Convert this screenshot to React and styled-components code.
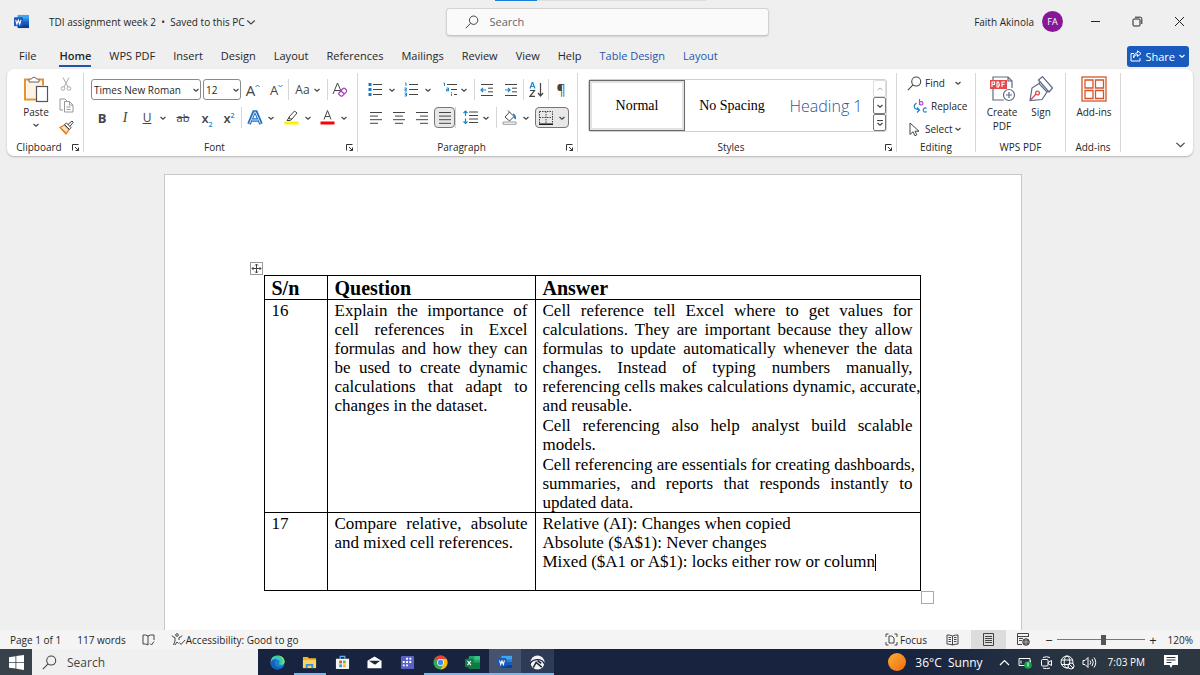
import React from 'react';
import styled, { createGlobalStyle } from 'styled-components';

const tabs = [
  { name: 'File', wide: true },
  { name: 'Home', active: true },
  { name: 'WPS PDF' },
  { name: 'Insert' },
  { name: 'Design' },
  { name: 'Layout' },
  { name: 'References' },
  { name: 'Mailings' },
  { name: 'Review' },
  { name: 'View' },
  { name: 'Help' },
  { name: 'Table Design', blue: true },
  { name: 'Layout', blue: true },
];

const Icon = ({ w = 16, h = w, box, children, ...rest }) => (
  <Svg width={w} height={h} viewBox={box || `0 0 ${w} ${h}`} aria-hidden='true' {...rest}>
    {children}
  </Svg>
);

const Chevron = ({ size = 8, ...rest }) => (
  <Icon w={size} box='0 0 8 8' {...rest}>
    <path d='M1.5 3 4 5.3 6.5 3' strokeWidth={size > 8 ? 0.8 : 1.2} />
  </Icon>
);

const Launcher = ({ label }) => (
  <LauncherButton type='button' aria-label={label}>
    <Icon w={9}>
      <path d='M1.5 7.5v-6h6M4 4l3.5 3.5M7.5 4.5v3h-3' stroke='#333' />
    </Icon>
  </LauncherButton>
);

const WordLogo = ({ size }) => (
  <Icon w={size} box='0 0 16 16' stroke='none'>
    <rect x='4' y='1' width='12' height='14' rx='1' fill='#2b7cd3' />
    <rect x='4' y='1' width='12' height='4' fill='#41a5ee' />
    <rect x='4' y='8' width='12' height='4' fill='#185abd' />
    <rect x='4' y='11.5' width='12' height='3.5' fill='#103f91' />
    <rect x='0' y='3.5' width='9.5' height='9.5' rx='1' fill='#185abd' />
    <path d='M1.8 6.2 3.1 10.8 4.6 6.6 6.1 10.8 7.4 6.2' stroke='#fff' strokeWidth='1.2' />
  </Icon>
);

const SearchGlyph = ({ size = 14 }) => (
  <Icon w={size} box='0 0 14 14'>
    <circle cx='8.6' cy='5.2' r='4.2' />
    <path d='M5.6 8.3.8 13.2' />
  </Icon>
);

const Lines = ({ rows }) => (
  <Icon w={14} h={14}>
    {rows.map(([from, to], i) => (
      <path key={i} d={`M${from} ${1.5 + i * 3.6}H${to}`} />
    ))}
  </Icon>
);

const TitleBar = () => (
  <Title>
    <TitleLeft>
      <WordLogo size={15} />
      <DocName type='button'>
        TDI assignment week 2 &nbsp;•&nbsp; Saved to this PC
        <Chevron size={12} />
      </DocName>
    </TitleLeft>
    <TitleSearch>
      <SearchGlyph />
      <input type='text' placeholder='Search' aria-label='Search' />
    </TitleSearch>
    <TitleRight>
      <span>Faith Akinola</span>
      <Avatar>FA</Avatar>
      <WindowButton type='button' aria-label='Minimize'>
        <Icon w={11}>
          <path d='M1 5.5h9' stroke='#222' />
        </Icon>
      </WindowButton>
      <WindowButton type='button' aria-label='Restore'>
        <Icon w={11}>
          <rect x='1' y='3' width='7' height='7' rx='1' stroke='#222' />
          <path d='M3 1.2h5.5a1.3 1.3 0 0 1 1.3 1.3V8' stroke='#222' />
        </Icon>
      </WindowButton>
      <WindowButton type='button' aria-label='Close'>
        <Icon w={11}>
          <path d='m1 1 9 9M10 1l-9 9' stroke='#222' />
        </Icon>
      </WindowButton>
    </TitleRight>
  </Title>
);

const ClipboardGroup = () => (
  <Group $w={77}>
    <Body $inset={9}>
      <BigButton type='button' $w={40}>
        <Icon w={26} h={28}>
          <path d='M6 4.5H2v20h12M16 4.5h4v6' stroke='#e8912d' strokeWidth='2' />
          <path d='M3.5 6h15v5h-5v12h-10z' fill='#fdf3e4' stroke='none' />
          <path d='M6 7V4h2.6a2.5 2.5 0 0 1 4.8 0H16v3z' fill='#fff' stroke='#666' />
          <rect x='13.5' y='11.5' width='11' height='15' fill='#fff' stroke='#555' strokeWidth='1.2' />
        </Icon>
        Paste
        <Chevron />
      </BigButton>
      <Stack $gap={1}>
        <Tool type='button' aria-label='Cut' $w={20}>
          <Icon w={14}>
            <g stroke='#aaa'>
              <path d='M4 .5 9 10M10 .5 5 10' />
              <circle cx='4' cy='11.5' r='1.8' />
              <circle cx='10' cy='11.5' r='1.8' />
            </g>
          </Icon>
        </Tool>
        <Tool type='button' aria-label='Copy' $w={20}>
          <Icon w={15}>
            <g stroke='#999'>
              <path d='M4 12H1V1h5l2 2' />
              <path d='M5.5 3.5h5L14 7v7H5.5zM10.5 3.5V7H14M7.5 9h4M7.5 11.5h4' />
            </g>
          </Icon>
        </Tool>
        <Tool type='button' aria-label='Format Painter' $w={20}>
          <Icon w={15}>
            <path d='M1 7.5 5.5 5 10 9.5 7 14z' fill='#fbe3c6' stroke='#e07b1a' strokeWidth='1.3' />
            <path d='m3 9 4 3.5' stroke='#e07b1a' />
            <path d='m5.5 4.5 2-1.500L12 7.500 10.500 9.500zM9 4.500 13 1l1.200 1.200L11 6.300' stroke='#444' fill='#fff' />
          </Icon>
        </Tool>
      </Stack>
    </Body>
    <Label>
      <span>Clipboard</span>
      <Launcher label='Clipboard settings' />
    </Label>
  </Group>
);

const FontGroup = () => (
  <Group $w={274}>
    <Body $column $inset={7}>
      <Row>
        <SelectBox $w={110}>
          <select aria-label='Font' defaultValue='Times New Roman'>
            <option>Times New Roman</option>
          </select>
          <Chevron />
        </SelectBox>
        <SelectBox $w={38} $gap={2}>
          <select aria-label='Font size' defaultValue='12'>
            <option>12</option>
          </select>
          <Chevron />
        </SelectBox>
        <Tool type='button' aria-label='Increase font size' $w={24} $size={15}>
          A
          <Icon w={5} h={12}>
            <path d='m.5 3 2-2 2 2' stroke='#1a86d0' />
          </Icon>
        </Tool>
        <Tool type='button' aria-label='Decrease font size' $w={23} $size={13}>
          A
          <Icon w={5} h={12}>
            <path d='m.5 1 2 2 2-2' stroke='#1a86d0' />
          </Icon>
        </Tool>
        <Rule />
        <Tool type='button' aria-label='Change case' $w={38} $size={12} $gap={3}>
          Aa
          <Chevron />
        </Tool>
        <Rule />
        <Tool type='button' aria-label='Clear formatting' $w={24}>
          <Icon w={16}>
            <path d='M1 12 5.5 1 9 9M2.700 8.500H8' />
            <path d='m7 11 4-4.500q1-.8 2 0l1.300 1.300q.8 1 0 2l-3.800 4q-1 .8-2 0L7 12.500q-.7-.7 0-1.500zM9 9l3.300 3' stroke='#a63db8' strokeWidth='1.2' />
          </Icon>
        </Tool>
      </Row>
      <Row>
        <Tool type='button' aria-label='Bold' $w={22} $size={13}>
          <b>B</b>
        </Tool>
        <Tool type='button' aria-label='Italic' $w={24} $size={14}>
          <SerifItalic>I</SerifItalic>
        </Tool>
        <Tool type='button' aria-label='Underline' $w={20} $size={12}>
          <u>U</u>
        </Tool>
        <Tool type='button' aria-label='Underline style' $w={12}>
          <Chevron />
        </Tool>
        <Tool type='button' aria-label='Strikethrough' $w={28} $size={11}>
          <s>ab</s>
        </Tool>
        <Tool type='button' aria-label='Subscript' $w={20} $size={13}>
          <Script>
            x<sub>2</sub>
          </Script>
        </Tool>
        <Tool type='button' aria-label='Superscript' $w={24} $size={13}>
          <Script>
            x<sup>2</sup>
          </Script>
        </Tool>
        <Rule />
        <Tool type='button' aria-label='Text effects' $w={38} $gap={4}>
          <Icon w={16}>
            <path d='M2 14 7 2h2l5 12M4.7 10h6.600' stroke='#1e6fc0' strokeWidth='3.6' />
            <path d='M2.5 13.5 7.500 2h1l5 11.500M5 10h6' stroke='#d8ecfb' />
          </Icon>
          <Chevron />
        </Tool>
        <Tool type='button' aria-label='Highlight colour' $w={36} $gap={5}>
          <Icon w={15}>
            <path d='M.5 11.5h14v3H.5z' fill='#ffef00' stroke='none' />
            <path d='M5 7 10.500 1 13 3 8 9H5.500zM5.500 7 3 10.500h3.500L8 9' />
          </Icon>
          <Chevron />
        </Tool>
        <Tool type='button' aria-label='Font colour' $w={36} $gap={5}>
          <Icon w={15}>
            <path d='M.5 11.5h14v3H.5z' fill='#f00' stroke='none' />
            <path d='m4 9.5 3.500-9 3.500 9M5.200 6.500h4.600' />
          </Icon>
          <Chevron />
        </Tool>
      </Row>
    </Body>
    <Label>
      <span>Font</span>
      <Launcher label='Font settings' />
    </Label>
  </Group>
);

const ParagraphGroup = () => (
  <Group $w={220}>
    <Body $column $inset={6}>
      <Row>
        <Tool type='button' aria-label='Bullets' $w={36} $gap={5}>
          <Icon w={15}>
            <path d='M5 2.5h9M5 7.5h9M5 12.5h9' />
            <path d='M.5 1h3v3h-3zM.5 6h3v3h-3zM.5 11h3v3h-3z' fill='#1a78c8' stroke='none' />
          </Icon>
          <Chevron />
        </Tool>
        <Tool type='button' aria-label='Numbering' $w={36} $gap={5}>
          <Icon w={15}>
            <path d='M5 2.5h9M5 7.5h9M5 12.5h9' />
            <path d='M1 1h1v3M.5 6h2v1.5H1V9h2M.5 11h2v3h-2M1 12.5h1.5' stroke='#1a86d0' />
          </Icon>
          <Chevron />
        </Tool>
        <Tool type='button' aria-label='Multilevel list' $w={38} $gap={2}>
          <Icon w={15}>
            <path d='M4 2.5h10M8 7.5h6M11 12.5h3' />
            <path d='M.5 1h1v3M3.5 6h2v3h-2V7.500h2M8.500 11.500V14M8.500 10v.8' stroke='#1a86d0' />
          </Icon>
          <Chevron />
        </Tool>
        <Rule />
        <Tool type='button' aria-label='Decrease indent' $w={24}>
          <Icon w={14}>
            <path d='M1 1.5h12M8 5.2h5M8 8.8h5M1 12.5h12' />
            <path d='M6 7H1M3 5 1 7l2 2' stroke='#1a86d0' strokeWidth='1.2' />
          </Icon>
        </Tool>
        <Tool type='button' aria-label='Increase indent' $w={24}>
          <Icon w={14}>
            <path d='M1 1.5h12M8 5.2h5M8 8.8h5M1 12.5h12' />
            <path d='M1 7h5M4 5l2 2-2 2' stroke='#1a86d0' strokeWidth='1.2' />
          </Icon>
        </Tool>
        <Rule />
        <Tool type='button' aria-label='Sort' $w={24}>
          <Icon w={15}>
            <path d='M1 6.5 3.5 0 6 6.5M2 4.5h3' stroke='#1a86d0' strokeWidth='1.2' />
            <path d='M1 8.5h4.5L1 14.300h5M11.500 1v13M9 11l2.500 3L14 11' strokeWidth='1.2' />
          </Icon>
        </Tool>
        <Rule />
        <Tool type='button' aria-label='Show formatting marks' $w={24} $size={14}>
          ¶
        </Tool>
      </Row>
      <Row>
        <Tool type='button' aria-label='Align left' $w={24}>
          <Lines rows={[[1, 13], [1, 9], [1, 13], [1, 9]]} />
        </Tool>
        <Tool type='button' aria-label='Centre' $w={22}>
          <Lines rows={[[1, 13], [3, 11], [1, 13], [3, 11]]} />
        </Tool>
        <Tool type='button' aria-label='Align right' $w={24}>
          <Lines rows={[[1, 13], [5, 13], [1, 13], [5, 13]]} />
        </Tool>
        <Tool type='button' aria-label='Justify' aria-pressed='true' $w={21} $on>
          <Lines rows={[[1, 13], [1, 13], [1, 13], [1, 13]]} />
        </Tool>
        <Rule />
        <Tool type='button' aria-label='Line spacing' $w={40} $gap={4}>
          <Icon w={15}>
            <path d='M6 2h9M6 5.5h9M6 9h9M6 12.5h9' />
            <path d='M2.500 1v5M.5 3l2-2 2 2M2.500 8.500v5M.5 11.500l2 2 2-2' stroke='#1a86d0' strokeWidth='1.2' />
          </Icon>
          <Chevron />
        </Tool>
        <Rule />
        <Tool type='button' aria-label='Shading' $w={38} $gap={5}>
          <Icon w={15}>
            <path d='M3 7 7.5 2 12 6.5 7.500 11zM7.500 2 6 .5' />
            <path d='M11 4q2.500 0 2.500 5-1.500-.5-1.500-3' fill='#1a78c8' stroke='#1a78c8' />
            <path d='M1 12h13v2.300H1z' stroke='#999' />
          </Icon>
          <Chevron />
        </Tool>
        <Tool type='button' aria-label='Borders' $w={34} $gap={5} $on>
          <Icon w={14}>
            <path d='M.5.5h13v12M.5.5v12M7 .5v12M.5 6.5h13' strokeDasharray='1.5 1' />
            <path d='M0 13.200h14' stroke='#111' strokeWidth='1.5' />
          </Icon>
          <Chevron />
        </Tool>
      </Row>
    </Body>
    <Label>
      <span>Paragraph</span>
      <Launcher label='Paragraph settings' />
    </Label>
  </Group>
);

const StylesGroup = () => (
  <Group $w={319}>
    <Body $inset={5}>
      <Gallery>
        <StyleItem type='button' $picked>
          Normal
        </StyleItem>
        <StyleItem type='button'>No Spacing</StyleItem>
        <StyleItem type='button' $heading>
          Heading 1
        </StyleItem>
        <GalleryScroll>
          <button type='button' aria-label='Previous styles' disabled>
            <Icon w={8}>
              <path d='M1.500 5 4 3l2.500 2' stroke='#aaa' />
            </Icon>
          </button>
          <button type='button' aria-label='Next styles'>
            <Chevron />
          </button>
          <button type='button' aria-label='More styles'>
            <Icon w={8}>
              <path d='M1 1.5h6M1.500 4 4 6.300 6.500 4' strokeWidth='1.2' />
            </Icon>
          </button>
        </GalleryScroll>
      </Gallery>
    </Body>
    <Label>
      <span>Styles</span>
      <Launcher label='Styles settings' />
    </Label>
  </Group>
);

const EditingGroup = () => (
  <Group $w={79}>
    <Body $inset={6}>
      <Stack $gap={3}>
        <TextTool type='button'>
          <SearchGlyph size={15} />
          Find
          <Chevron />
        </TextTool>
        <TextTool type='button'>
          <Icon w={15}>
            <path d='M6.500 0v6M6.500 4.200a1.700 1.700 0 1 1 0 .2' stroke='#b046c0' strokeWidth='1.2' />
            <path d='M13.500 9.500a2 2 0 1 0 0 3' stroke='#1a86d0' strokeWidth='1.2' />
            <path d='M3.500 4Q0 6.500 2 9.500l4 1.500M4 8.500 6.500 11 4 13.500' stroke='#1a86d0' strokeWidth='1.2' />
          </Icon>
          Replace
        </TextTool>
        <TextTool type='button' $tight>
          <Icon w={15}>
            <path d='M3 1v11.500l3-2.700 2 4 1.800-1L8 9.200h4z' />
          </Icon>
          Select
          <Chevron />
        </TextTool>
      </Stack>
    </Body>
    <Label>
      <span>Editing</span>
    </Label>
  </Group>
);

const PdfGroup = () => (
  <Group $w={90}>
    <Body $inset={6}>
      <BigButton type='button' $w={40}>
        <Icon w={28}>
          <path d='M5 5V2h15l4 4v7M5 12v13h11M20 2v4h4' stroke='#5d6b85' strokeWidth='1.2' />
          <path d='M2 5h17v9H2z' fill='#e5484d' stroke='none' />
          <path d='M4 12V7h2.500v2.500H4M9 7v5h1.500q1.500-2.500 0-5zM14 12V7h3M14 9.500h2.500' stroke='#fff' strokeWidth='1.1' />
          <circle cx='21' cy='20' r='5.5' fill='#fff' stroke='#5d6b85' strokeWidth='1.2' />
          <path d='M21 17v6M18 20h6' stroke='#5d6b85' strokeWidth='1.2' />
        </Icon>
        <span>
          Create
          <br />
          PDF
        </span>
      </BigButton>
      <BigButton type='button' $w={38}>
        <Icon w={28}>
          <path d='M3 25.500 5 13l7-4.500 8 8.500-5 7.500zM11.500 5l4-3.500 10 11.500-3.500 4zM12 8.500l1-2M20 17l1.500-1' stroke='#5d6b85' strokeWidth='1.2' />
          <path d='m3.500 25 5.500-6' stroke='#e5484d' strokeWidth='1.3' />
          <circle cx='10.5' cy='18' r='1.9' stroke='#e5484d' strokeWidth='1.3' />
        </Icon>
        Sign
      </BigButton>
    </Body>
    <Label>
      <span>WPS PDF</span>
    </Label>
  </Group>
);

const AddinsGroup = () => (
  <Group $w={55}>
    <Body $inset={6}>
      <BigButton type='button' $w={44}>
        <Icon w={28}>
          <g stroke='#d8532b' strokeWidth='1.3'>
            <rect x='2' y='2' width='24' height='24' />
            <path d='M5 5h8v8H5zM15.500 5h8v8h-8zM5 15.500h8v8H5zM15.500 15.500h8v8h-8z' />
          </g>
        </Icon>
        Add-ins
      </BigButton>
    </Body>
    <Label>
      <span>Add-ins</span>
    </Label>
  </Group>
);

const Document = () => (
  <Workspace>
    <Page>
      <TableFrame>
        <MoveHandle>
          <Icon w={11}>
            <path d='M5.500 1v9M1 5.500h9M4 2.500 5.500 1 7 2.500M4 8.500 5.500 10 7 8.500M2.500 4 1 5.500 2.500 7M8.500 4 10 5.500 8.500 7' />
          </Icon>
        </MoveHandle>
        <Table>
          <colgroup>
            <col width='63' />
            <col width='208' />
            <col width='385' />
          </colgroup>
          <thead>
            <tr>
              <th>S/n</th>
              <th>Question</th>
              <th>Answer</th>
            </tr>
          </thead>
          <tbody>
            <tr>
              <td>16</td>
              <td>
                <p>
                  Explain the importance of cell references in Excel formulas and how they can be
                  used to create dynamic calculations that adapt to changes in the dataset.
                </p>
              </td>
              <td>
                <p>
                  <Line>Cell reference tell Excel where to get values for </Line>
                  <Line>calculations. They are important because they allow </Line>
                  <Line>formulas to update automatically whenever the data </Line>
                  <Line>changes. Instead of typing numbers manually, </Line>
                  <Line>referencing cells makes calculations dynamic, accurate, </Line>
                  and reusable.
                </p>
                <p>
                  <Line>Cell referencing also help analyst build scalable </Line>
                  models.
                </p>
                <p>
                  <Line>Cell referencing are essentials for creating dashboards, </Line>
                  <Line>summaries, and reports that responds instantly to </Line>
                  updated data.
                </p>
              </td>
            </tr>
            <tr>
              <td>17</td>
              <td>
                <p>Compare relative, absolute and mixed cell references.</p>
              </td>
              <td>
                <p>
                  Relative (AI): Changes when copied
                  <br />
                  Absolute ($A$1): Never changes
                  <br />
                  Mixed ($A1 or A$1): locks either row or column
                  <Caret />
                  <br />
                  &nbsp;
                </p>
              </td>
            </tr>
          </tbody>
        </Table>
        <ResizeHandle />
      </TableFrame>
    </Page>
  </Workspace>
);

const StatusBar = () => (
  <Status>
    <StatusSide $gap={16}>
      <span>Page 1 of 1</span>
      <span>117 words</span>
      <Icon w={13} h={12}>
        <path d='M6 2v9M6 2Q4 .5 1 1v9q3-.5 5 1M6 2q2-1.500 6-1v5M8 9.500l1.500 1.500L12 7.500' />
      </Icon>
      <Access>
        <Icon w={15} h={13}>
          <circle cx='6' cy='2' r='1.3' />
          <path d='M1 2.500q0 1.500 3 2V8l-1.500 4M11 2.500q0 1.500-3 2V7M4 12l2-3 1.500 1.500M8.500 9.500l1.500 2 4-4.500' />
        </Icon>
        Accessibility: Good to go
      </Access>
    </StatusSide>
    <StatusSide>
      <ViewButton type='button' $w={54}>
        <Icon w={13}>
          <path d='M1 4V1h2.500M9.500 1H12v3M1 9v3h2.500M9.500 12H12V9M4 3h3l2 2v5H4z' />
        </Icon>
        Focus
      </ViewButton>
      <ViewButton type='button' aria-label='Read mode' $w={38}>
        <Icon w={13} h={12}>
          <path d='M6.500 2v9M6.500 2Q4 .8 1 1v9q3 0 5.500 1Q9 10 12 10V1Q9 .8 6.500 2M2.500 3.500H5M2.500 5.500H5M2.500 7.500H5M8 3.500h2.500M8 5.500h2.500M8 7.500h2.500' />
        </Icon>
      </ViewButton>
      <ViewButton type='button' aria-label='Print layout' $w={35} $on>
        <Icon w={11} h={13}>
          <path d='M.5.5h10v12H.5zM2 3.500h7M2 5.500h7M2 7.500h7M2 9.500h7' />
        </Icon>
      </ViewButton>
      <ViewButton type='button' aria-label='Web layout' $w={35}>
        <Icon w={13}>
          <path d='M5 11.500H.5V.5h11V4M.5 3.500h11M2 5.500h4M2 7.500h3' />
          <circle cx='9' cy='9' r='3.3' fill='#555' />
          <path d='M6 9h6M9 6v6' stroke='#ddd' strokeWidth='.6' />
        </Icon>
      </ViewButton>
      <ZoomButton type='button' aria-label='Zoom out'>
        −
      </ZoomButton>
      <Slider type='range' min='0' max='100' defaultValue='53' aria-label='Zoom' />
      <ZoomButton type='button' aria-label='Zoom in'>
        +
      </ZoomButton>
      <ZoomValue>120%</ZoomValue>
    </StatusSide>
  </Status>
);

const taskApps = [
  {
    name: 'Edge',
    art: (
      <>
        <circle cx='8' cy='8' r='7.5' fill='#1b7fd6' />
        <path d='M.5 8Q1 .5 8 .5q7 .5 7.500 6.500 0 3.500-4 3.500-2.500 0-1.500-2Q11 5 7 4.500 3 4.200.5 8z' fill='#3cc7b0' />
        <path d='M9 .6q6.500 1 6.500 6.400 0 3.500-4 3.500 3-3.500 1-6.500Q11 1.500 9 .6z' fill='#6fdc6c' />
        <path d='M.6 7.500q2-3.500 6.400-3-3 2-1.500 5.500t8 3Q10.500 16 6 15.200.5 13.500.6 7.500z' fill='#1563b8' />
      </>
    ),
  },
  {
    name: 'File Explorer',
    open: true,
    art: (
      <>
        <path d='M1 2h5l1.500 1.500H15V13H1z' fill='#f0b429' />
        <path d='M1 5.500h14V14H1z' fill='#fcd462' />
        <path d='M4 14V9.500h8V14h-2v-2.500H6V14z' fill='#3c8fd9' />
      </>
    ),
  },
  {
    name: 'Store',
    art: (
      <>
        <path d='M5.500 4V1.500h5V4' stroke='#5bb5ea' strokeWidth='1.3' />
        <path d='M1 4h14v10q0 1-1 1H2q-1 0-1-1z' fill='#f2f4f6' />
        <path d='M4.500 6h3v3h-3z' fill='#e8502a' />
        <path d='M8.500 6h3v3h-3z' fill='#7cb82f' />
        <path d='M4.500 10h3v3h-3z' fill='#2a9fe0' />
        <path d='M8.500 10h3v3h-3z' fill='#f7b81c' />
      </>
    ),
  },
  {
    name: 'Mail',
    art: (
      <>
        <path d='M.5 6 8 1.500 15.500 6v8H.5z' fill='#fff' />
        <path d='M2 6h12L9.500 9.500z' fill='#17233f' />
        <path d='m2 6 8 3-1.500 1.500z' fill='#17233f' />
      </>
    ),
  },
  {
    name: 'Planner',
    art: (
      <>
        <rect x='1' y='1' width='14' height='14' rx='1' fill='#5b62c4' />
        <path d='M6.500 3h2v2h-2zM10 3h2v2h-2zM3 6.500h2v2H3zM6.500 6.500h2v2h-2zM10 6.500h2v2h-2zM3 10h2v2H3zM6.500 10h2v2h-2z' fill='#fff' />
      </>
    ),
  },
  {
    name: 'Chrome',
    open: true,
    art: (
      <>
        <circle cx='8' cy='8' r='7.5' fill='#34a853' />
        <path d='M8 8 1.500 4.300A7.500 7.500 0 0 1 14.500 4.300z' fill='#ea4335' />
        <path d='M8 4.300h6.500A7.500 7.500 0 0 1 8 15.500l3.200-6z' fill='#fbbc05' />
        <circle cx='8' cy='8' r='3.7' fill='#fff' />
        <circle cx='8' cy='8' r='2.9' fill='#4285f4' />
      </>
    ),
  },
  {
    name: 'Excel',
    open: true,
    art: (
      <>
        <rect x='4' y='1' width='12' height='14' rx='1' fill='#21a366' />
        <path d='M10 1h5q1 0 1 1v3h-6z' fill='#33c481' />
        <path d='M4 8h12v6q0 1-1 1H5q-1 0-1-1z' fill='#107c41' />
        <rect x='0' y='4' width='9' height='9' rx='1' fill='#107c41' />
        <path d='m2.700 6.200 3.600 4.600M6.300 6.200l-3.600 4.600' stroke='#fff' strokeWidth='1.2' />
      </>
    ),
  },
  { name: 'Word', open: true, active: true, word: true },
  {
    name: 'Dashboard',
    open: true,
    shade: true,
    art: (
      <>
        <circle cx='8' cy='8' r='7.5' fill='#f4f4f4' />
        <path d='M0 9.500Q2 5 8 5t7.500 5' stroke='#17233f' strokeWidth='1.3' />
        <path d='m3.500 13.500 3-5.500 6 5' stroke='#17233f' strokeWidth='1.6' />
        <path d='m8 6 4 3' stroke='#17233f' strokeWidth='1.8' />
      </>
    ),
  },
];

const appShade = ({ $active, $shade }) => {
  if ($active) return '#46536d';
  return $shade ? '#2e3b57' : 'none';
};

const TaskBar = () => (
  <Taskbar>
    <StartButton type='button' aria-label='Start'>
      <Icon w={15} stroke='none'>
        <path d='M0 2.200 6.500 1.200V7H0zM7.300 1.100 15 0v7H7.300zM0 7.800h6.500v5.800L0 12.700zM7.300 7.800H15V15l-7.700-1.200z' fill='#fff' />
      </Icon>
    </StartButton>
    <TaskSearch>
      <SearchGlyph size={15} />
      <input type='text' placeholder='Search' aria-label='Search the computer' />
    </TaskSearch>
    <Apps>
      {taskApps.map(({ name, open, active, shade, word, art }) => (
        <TaskApp key={name} type='button' aria-label={name} $open={open} $active={active} $shade={shade}>
          {word ? (
            <WordLogo size={14} />
          ) : (
            <Icon w={15} box='0 0 16 16' stroke='none'>
              {art}
            </Icon>
          )}
        </TaskApp>
      ))}
    </Apps>
    <Tray>
      <Sun />
      <Weather>36°C&nbsp; Sunny</Weather>
      <TrayIcons>
        <Icon w={13} stroke='#fff'>
          <path d='M2 9l4.500-4.500L11 9' strokeWidth='1.2' />
        </Icon>
        <Icon w={15} stroke='#fff'>
          <path d='M1 3.500h11v7H1zM12.500 5.500v3M3 5.500v3' />
          <circle cx='10' cy='10' r='3.8' fill='#16a34a' stroke='none' />
          <path d='M10 7.500v4' />
        </Icon>
        <Icon w={13} stroke='#fff'>
          <path d='M3 1.500q3.500-1.500 7 0M3 12q3.500 1.500 7 0' />
          <rect x='1.5' y='3.5' width='6.5' height='6.5' rx='1' />
          <path d='m8 6.500 3.500-2v5L8 7.500' />
        </Icon>
        <Icon w={15} stroke='#fff'>
          <circle cx='7' cy='7' r='6' />
          <ellipse cx='7' cy='7' rx='2.8' ry='6' />
          <path d='M1 5h12M1 9.500h8' />
          <circle cx='11' cy='11' r='3' fill='#2c3742' />
          <path d='m9 9 4 4' />
        </Icon>
        <Icon w={15} stroke='#fff'>
          <path d='M1 5.500h2l3-3v10l-3-3H1zM8 5.500q1.500 2 0 4M10 4q2.500 3.500 0 7M12 2.500q3.500 5 0 10' />
        </Icon>
      </TrayIcons>
      <Clock>7:03 PM</Clock>
      <Icon w={16} stroke='none'>
        <path d='M1 1h14v10H9.500L8 14l-1.500-3H1z' fill='#fff' />
        <path d='M3.500 3.500h9M3.500 6h9M3.500 8.500h5' stroke='#2c3742' />
      </Icon>
    </Tray>
  </Taskbar>
);

const App = () => (
  <>
    <GlobalStyle />
    <Screen>
      <TitleBar />
      <TabRow>
        <TabList>
          {tabs.map(({ name, active, blue, wide }) => (
            <Tab key={name + blue} type='button' $active={active} $blue={blue} $wide={wide}>
              {name}
            </Tab>
          ))}
        </TabList>
        <ShareButton type='button'>
          <Icon w={12} stroke='#fff'>
            <path d='M4 3.500H1V11h9V8M3.500 8Q4 4.500 7.500 4.500v2L11 3.500 7.500.8v2Q3.500 3 3.500 8z' />
          </Icon>
          Share
          <Chevron stroke='#fff' />
        </ShareButton>
      </TabRow>
      <Ribbon>
        <ClipboardGroup />
        <FontGroup />
        <ParagraphGroup />
        <StylesGroup />
        <EditingGroup />
        <PdfGroup />
        <AddinsGroup />
        <CollapseButton type='button' aria-label='Ribbon display options'>
          <Chevron size={13} />
        </CollapseButton>
      </Ribbon>
      <Document />
      <StatusBar />
      <TaskBar />
    </Screen>
  </>
);
export default App;

const GlobalStyle = createGlobalStyle`
  * {
    box-sizing: border-box;
  }
  body {
    margin: 0;
    background: #efefef;
    font-family: 'Open Sans', 'Noto Sans', sans-serif;
    font-size: 10px;
    color: #262626;
  }
  button, input, select {
    font: inherit;
    color: inherit;
    border: 0;
    margin: 0;
    padding: 0;
    background: none;
  }
  p {
    margin: 0;
  }
`;

const Svg = styled.svg.attrs(({ stroke }) => ({ stroke: stroke || '#444', fill: 'none' }))`
  flex: none;
  display: block;
`;

const Screen = styled.div`
  min-height: 100vh;
  display: flex;
  flex-direction: column;
`;

const Title = styled.header`
  position: relative;
  display: flex;
  align-items: center;
  height: 43px;
  padding-left: 14px;

  &::before {
    content: '';
    position: absolute;
    top: 0;
    left: 495px;
    width: 211px;
    height: 1px;
    background: linear-gradient(90deg, #1a7fd8 20%, #dcdcdc 20%);
  }
`;

const TitleLeft = styled.div`
  flex: 1;
  display: flex;
  align-items: center;
  gap: 20px;
`;

const DocName = styled.button`
  display: flex;
  align-items: center;
  white-space: nowrap;
`;

const TitleSearch = styled.label`
  flex: 0 1 323px;
  display: flex;
  align-items: center;
  gap: 11px;
  height: 28px;
  padding: 0 18px;
  border: 1px solid #d2d2d2;
  border-bottom-color: #c4c4c4;
  border-radius: 4px;
  background: #fafafa;
  box-shadow: 0 1px 2px rgba(0, 0, 0, 0.12);

  input {
    flex: 1;
    min-width: 0;
    font-size: 11px;
    outline: 0;
  }
  input::placeholder {
    color: #666;
    opacity: 1;
  }
`;

const TitleRight = styled.div`
  flex: 1;
  display: flex;
  align-items: center;
  justify-content: flex-end;
`;

const Avatar = styled.span`
  display: flex;
  align-items: center;
  justify-content: center;
  width: 21px;
  height: 21px;
  margin: 0 11px 0 8px;
  border-radius: 50%;
  background: #881798;
  color: #fff;
  font-size: 9px;
`;

const WindowButton = styled.button`
  width: 42px;
  height: 28px;
  display: flex;
  align-items: center;
  justify-content: center;
`;

const TabRow = styled.nav`
  display: flex;
  align-items: center;
  justify-content: space-between;
  height: 26px;
  padding: 0 11px 0 19px;
`;

const TabList = styled.div`
  display: flex;
  gap: 18px;
`;

const Tab = styled.button`
  height: 22px;
  margin-right: ${({ $wide }) => ($wide ? 5 : 0)}px;
  font-size: 11px;
  white-space: nowrap;
  font-weight: ${({ $active }) => ($active ? 600 : 400)};
  color: ${({ $blue }) => ($blue ? '#1f55b0' : '#262626')};
  border-bottom: 2px solid ${({ $active }) => ($active ? '#1f55a8' : 'transparent')};
`;

const ShareButton = styled.button`
  display: flex;
  align-items: center;
  gap: 3px;
  height: 21px;
  padding: 0 3px;
  border-radius: 3px;
  background: #185abd;
  color: #fff;
  font-size: 11px;
`;

const Ribbon = styled.section`
  display: flex;
  height: 87px;
  margin: 0 7px;
  padding-top: 4px;
  border-radius: 7px;
  background: #fff;
  box-shadow: 0 1px 2px rgba(0, 0, 0, 0.25);
`;

const Group = styled.div`
  flex: 0 0 ${({ $w }) => $w}px;
  display: flex;
  flex-direction: column;
  height: 79px;
  border-right: 1px solid #d6d6d6;
`;

const Body = styled.div`
  flex: 1;
  display: flex;
  flex-direction: ${({ $column }) => ($column ? 'column' : 'row')};
  gap: ${({ $column }) => ($column ? 7 : 0)}px;
  padding-top: ${({ $column }) => ($column ? 6 : 0)}px;
  padding-left: ${({ $inset }) => $inset}px;
`;

const Label = styled.div`
  display: flex;
  align-items: center;
  height: 10px;
  line-height: 10px;
  text-align: center;

  span {
    flex: 1;
    white-space: nowrap;
  }
`;

const LauncherButton = styled.button`
  width: 12px;
  height: 10px;
`;

const Row = styled.div`
  display: flex;
  align-items: center;
  height: 21px;
`;

const Stack = styled.div`
  display: flex;
  flex-direction: column;
  align-items: flex-start;
  gap: ${({ $gap }) => $gap}px;
`;

const Rule = styled.span`
  width: 1px;
  height: 21px;
  background: #d6d6d6;
`;

const Tool = styled.button`
  flex: none;
  display: flex;
  align-items: center;
  justify-content: center;
  gap: ${({ $gap }) => $gap || 0}px;
  width: ${({ $w }) => $w}px;
  height: 21px;
  line-height: 20px;
  font-size: ${({ $size }) => $size || 11}px;
  color: #444;
  border: 1px solid ${({ $on }) => ($on ? '#777' : 'transparent')};
  border-radius: 4px;
  background: ${({ $on }) => ($on ? '#e8e8e8' : 'none')};
`;

const SerifItalic = styled.i`
  font-family: 'Liberation Serif', serif;
`;

const Script = styled.span`
  font-weight: 600;

  sub,
  sup {
    font-size: 7px;
    line-height: 0;
    color: #1a86d0;
  }
`;

const SelectBox = styled.span`
  position: relative;
  width: ${({ $w }) => $w}px;
  margin-left: ${({ $gap }) => $gap || 0}px;

  select {
    width: 100%;
    height: 21px;
    padding: 0 2px;
    appearance: none;
    border: 1px solid #8a8a8a;
    border-radius: 3px;
    background: #fff;
  }
  svg {
    position: absolute;
    right: 1px;
    top: 7px;
    pointer-events: none;
  }
`;

const BigButton = styled.button`
  display: flex;
  flex-direction: column;
  align-items: center;
  align-self: flex-start;
  gap: 2px;
  width: ${({ $w }) => $w}px;
  padding-top: 2px;
  line-height: 14px;
`;

const TextTool = styled.button`
  display: flex;
  align-items: center;
  gap: 3px;
  height: 20px;
  padding-left: 4px;

  svg:last-child {
    margin-left: ${({ $tight }) => ($tight ? '-2px' : '6px')};
  }
`;

const Gallery = styled.div`
  flex: 1;
  display: flex;
  height: 53px;
  margin: 6px 9px 0 5px;
  border: 1px solid #d0d0d0;
  border-radius: 3px;
`;

const StyleItem = styled.button`
  flex: 1;
  white-space: nowrap;
  font-family: ${({ $heading }) => ($heading ? "'Open Sans', sans-serif" : "'Liberation Serif', serif")};
  font-weight: ${({ $heading }) => ($heading ? 300 : 400)};
  font-size: ${({ $heading }) => ($heading ? 16 : 14)}px;
  color: ${({ $heading }) => ($heading ? '#2f5496' : '#000')};
  border: ${({ $picked }) => ($picked ? '1px solid #6a6a6a' : 0)};
  box-shadow: ${({ $picked }) => ($picked ? 'inset 0 0 0 2px #e2e2e2' : 'none')};
`;

const GalleryScroll = styled.div`
  width: 13px;
  display: flex;
  flex-direction: column;

  button {
    flex: 1;
    display: flex;
    align-items: center;
    justify-content: center;
    border: 1px solid #777;
    border-radius: 2px;
  }
  button:disabled {
    border-color: #ddd;
  }
`;

const CollapseButton = styled.button`
  align-self: flex-end;
  margin: 0 6px 5px auto;
`;

const Workspace = styled.main`
  flex: 1;
  display: flex;
  justify-content: center;
  padding: 18px 15px 0 0;
`;

const Page = styled.article`
  width: 100%;
  max-width: 858px;
  padding: 100px 100px 37px 99px;
  border: 1px solid #c8c8c8;
  border-bottom: 0;
  background: #fff;
`;

const TableFrame = styled.div`
  position: relative;
`;

const Table = styled.table`
  width: 100%;
  table-layout: fixed;
  border-collapse: collapse;
  font-family: 'Liberation Serif', serif;
  font-size: 17px;
  line-height: 19px;
  color: #000;

  th,
  td {
    border: 1px solid #000;
    padding: 1px 7px 0 7px;
    vertical-align: top;
    text-align: justify;
  }
  th {
    font-size: 20px;
    line-height: 22px;
    text-align: left;
  }
  p + p {
    margin-top: 1px;
  }
`;

const Line = styled.span`
  display: block;
  white-space: nowrap;
  text-align-last: justify;
`;

const Caret = styled.span`
  display: inline-block;
  width: 1px;
  height: 17px;
  vertical-align: text-bottom;
  background: #000;
`;

const MoveHandle = styled.span`
  position: absolute;
  left: -14px;
  top: -13px;
  border: 1px solid #999;
  background: #fff;
`;

const ResizeHandle = styled.span`
  position: absolute;
  right: -13px;
  bottom: -13px;
  width: 13px;
  height: 13px;
  border: 1px solid #aaa;
  background: #fff;
`;

const Status = styled.footer`
  display: flex;
  justify-content: space-between;
  height: 19px;
  padding: 0 7px 0 10px;
  background: #f4f4f4;
`;

const StatusSide = styled.div`
  display: flex;
  align-items: center;
  gap: ${({ $gap }) => $gap || 0}px;
  white-space: nowrap;
`;

const Access = styled.span`
  display: flex;
  align-items: center;
`;

const ViewButton = styled.button`
  display: flex;
  align-items: center;
  justify-content: center;
  gap: 2px;
  width: ${({ $w }) => $w}px;
  height: 100%;
  background: ${({ $on }) => ($on ? '#dcdcdc' : 'none')};
`;

const ZoomButton = styled.button`
  width: 16px;
  font-size: 13px;
  line-height: 16px;
`;

const Slider = styled.input`
  appearance: none;
  width: 88px;
  height: 12px;
  background: linear-gradient(#777, #777) center / 100% 1px no-repeat;

  &::-webkit-slider-thumb {
    appearance: none;
    width: 5px;
    height: 10px;
    background: #555;
  }
`;

const ZoomValue = styled.span`
  width: 32px;
  text-align: right;
`;

const Taskbar = styled.footer`
  display: flex;
  height: 26px;
  background: linear-gradient(90deg, #17233f 0%, #17233f 75%, #2c3742 92%);
`;

const StartButton = styled.button`
  width: 32px;
  display: flex;
  align-items: center;
  justify-content: center;
  background: #37424a;
`;

const TaskSearch = styled.label`
  width: 226px;
  display: flex;
  align-items: center;
  gap: 10px;
  padding-left: 10px;
  background: #f0f0f0;

  input {
    flex: 1;
    min-width: 0;
    font-size: 12px;
    outline: 0;
  }
  input::placeholder {
    color: #444;
    opacity: 1;
  }
`;

const Apps = styled.div`
  display: grid;
  grid-template-columns: repeat(9, 1fr);
  width: 293px;
  margin-left: 3px;
`;

const TaskApp = styled.button`
  display: flex;
  align-items: center;
  justify-content: center;
  background: ${appShade};
  box-shadow: ${({ $open }) => ($open ? 'inset 0 -2px #76b9ed' : 'none')};
`;

const Tray = styled.div`
  margin-left: auto;
  display: flex;
  align-items: center;
  padding-right: 21px;
  color: #fff;
  white-space: nowrap;
`;

const Sun = styled.span`
  width: 18px;
  height: 18px;
  border-radius: 50%;
  background: linear-gradient(135deg, #fbb034, #f26a12);
`;

const Weather = styled.span`
  margin: 0 15px 0 9px;
  font-size: 12px;
`;

const TrayIcons = styled.span`
  display: flex;
  align-items: center;
  gap: 7px;
`;

const Clock = styled.span`
  margin: 0 18px 0 11px;
`;
